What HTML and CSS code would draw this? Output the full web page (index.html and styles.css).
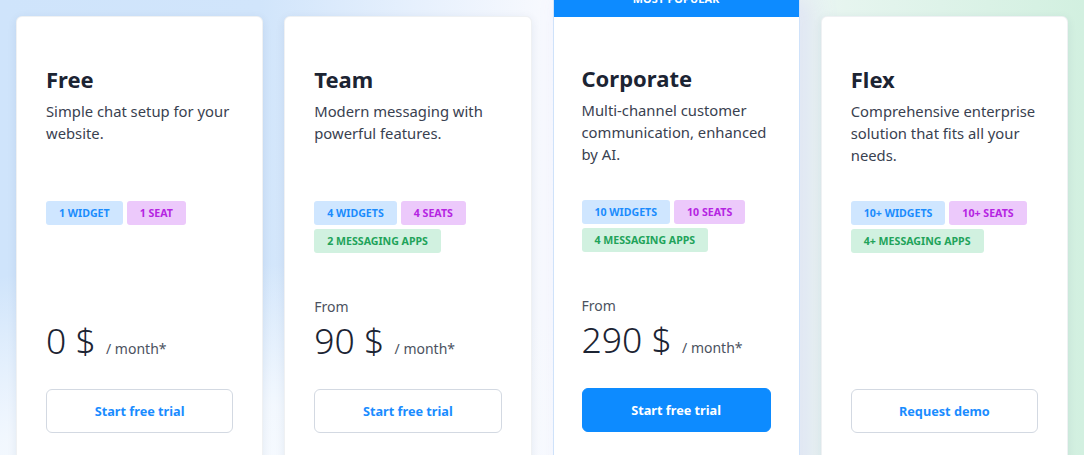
FILE: index.html
```html
<!DOCTYPE html>
<html lang="en">
<head>
    <meta charset="UTF-8">
    <meta name="viewport" content="width=device-width, initial-scale=1.0">
    <title>Pricing</title>
    <link rel="stylesheet" href="styles.css">
</head>
<body>

<div class="plans">

    <div class="plan">
        <h2 class="plan-name">Free</h2>
        <p class="plan-desc">Simple chat setup for your website.</p>
        <div class="tags">
            <span class="tag tag-blue">1 Widget</span>
            <span class="tag tag-purple">1 Seat</span>
        </div>
        <div class="from"></div>
        <div class="price">0 $ <span class="per">/ month*</span></div>
        <a class="btn" href="#">Start free trial</a>
    </div>

    <div class="plan">
        <h2 class="plan-name">Team</h2>
        <p class="plan-desc">Modern messaging with powerful features.</p>
        <div class="tags">
            <span class="tag tag-blue">4 Widgets</span>
            <span class="tag tag-purple">4 Seats</span>
            <span class="tag tag-green">2 Messaging apps</span>
        </div>
        <div class="from">From</div>
        <div class="price">90 $ <span class="per">/ month*</span></div>
        <a class="btn" href="#">Start free trial</a>
    </div>

    <div class="plan plan-featured">
        <div class="ribbon">Most popular</div>
        <div class="plan-body">
            <h2 class="plan-name">Corporate</h2>
            <p class="plan-desc">Multi-channel customer communication, enhanced by AI.</p>
            <div class="tags">
                <span class="tag tag-blue">10 Widgets</span>
                <span class="tag tag-purple">10 Seats</span>
                <span class="tag tag-green">4 Messaging apps</span>
            </div>
            <div class="from">From</div>
            <div class="price">290 $ <span class="per">/ month*</span></div>
            <a class="btn btn-primary" href="#">Start free trial</a>
        </div>
    </div>

    <div class="plan">
        <h2 class="plan-name">Flex</h2>
        <p class="plan-desc">Comprehensive enterprise solution that fits all your needs.</p>
        <div class="tags">
            <span class="tag tag-blue">10+ Widgets</span>
            <span class="tag tag-purple">10+ Seats</span>
            <span class="tag tag-green">4+ Messaging apps</span>
        </div>
        <div class="from"></div>
        <div class="price"></div>
        <a class="btn" href="#">Request demo</a>
    </div>

</div>

</body>
</html>
```

FILE: styles.css
```css
html, body {
    height: 100%;
}

body {
    margin: 0;
    overflow: hidden;
    font-family: 'Noto Sans', 'Open Sans', Arial, sans-serif;
    color: #1f2937;
    background-color: #f5f8fd;
    background-image:
        radial-gradient(ellipse 560px 230px at 18% 108%, #f8fbff 0%, rgba(248, 251, 255, 0.85) 40%, rgba(248, 251, 255, 0) 100%),
        linear-gradient(to right, #cfe4fb 0%, #d1e5fb 24%, #e6f0fd 38%, #f7f9fe 50%, #f6f8fd 66%, #e6f5ef 78%, #d2f0e0 100%);
}

.plans {
    display: grid;
    grid-template-columns: repeat(4, minmax(0, 1fr));
    gap: 21px;
    padding: 16px 16px 0 16px;
    align-items: start;
}

.plan {
    height: 470px;
    box-sizing: border-box;
    padding: 47px 29px 0 29px;
    background-color: #fff;
    border-radius: 6px;
    border: 1px solid rgba(30, 50, 80, 0.07);
    box-shadow: 0 2px 10px rgba(30, 50, 90, 0.08);
}

.plan-featured {
    height: 502px;
    margin-top: -32px;
    padding: 0;
    border: 1px solid #cfe2fa;
    border-radius: 0;
    box-shadow: 12px 12px 26px rgba(150, 120, 240, 0.14);
}

.ribbon {
    background-color: #0d8bff;
    color: #fff;
    text-align: center;
    font-size: 10.8px;
    font-weight: 700;
    line-height: 16px;
    padding: 6px 0 10px 0;
    text-transform: uppercase;
    letter-spacing: 0.2px;
}

.plan-body {
    padding: 46px 28px 0 28px;
}

.plan-name {
    margin: 0;
    font-size: 22px;
    font-weight: 700;
    line-height: 30px;
    color: #1c2433;
}

.plan-desc {
    margin: 6px 0 0 0;
    font-size: 14.8px;
    line-height: 22px;
    min-height: 66px;
    color: #394150;
}

.tags {
    display: flex;
    flex-wrap: wrap;
    gap: 4px;
    margin-top: 35px;
    min-height: 52px;
    align-content: flex-start;
}

.tag {
    display: inline-block;
    height: 24px;
    line-height: 24px;
    padding: 0 13px;
    border-radius: 3px;
    font-size: 10.6px;
    font-weight: 700;
    text-transform: uppercase;
}

.tag-blue {
    background-color: #cfe6ff;
    color: #1b8cfd;
}

.tag-purple {
    background-color: #ecc9fb;
    color: #b524e2;
}

.tag-green {
    background-color: #d1f1e0;
    color: #21a35a;
}

.from {
    margin-top: 43px;
    height: 22px;
    font-size: 14px;
    line-height: 22px;
    color: #4b5260;
}

.price {
    height: 44px;
    font-size: 35.5px;
    line-height: 44px;
    font-weight: 300;
    color: #1c2433;
}

.per {
    margin-left: 1px;
    font-size: 14px;
    font-weight: 400;
    color: #4b5260;
}

.btn {
    display: block;
    margin-top: 27px;
    height: 44px;
    line-height: 42px;
    box-sizing: border-box;
    border: 1px solid #d3d9e2;
    border-radius: 6px;
    text-align: center;
    text-decoration: none;
    font-size: 12.7px;
    font-weight: 700;
    color: #1a8cff;
    background-color: #fff;
}

.btn-primary {
    background-color: #0d8bff;
    border-color: #0d8bff;
    color: #fff;
}
```
